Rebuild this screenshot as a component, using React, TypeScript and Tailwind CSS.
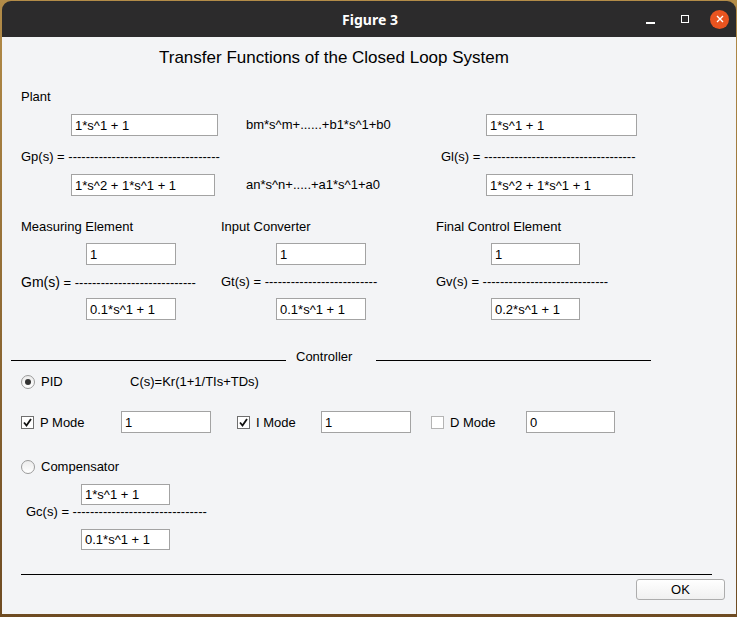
import React from 'react';

const font = "font-['Liberation_Sans',Arial,sans-serif]";

const dashes = (n: number) => '-'.repeat(n);

const Field: React.FC<{ value: string; w: string; h?: string; className?: string }> = ({ value, w, h = 'h-[22px]', className = '' }) => (
  <div className={`${w} ${h} ${className} shrink-0 bg-white border border-[#a3a3a3] flex items-center pl-[3px] text-[13px] text-black leading-none`}>
    {value}
  </div>
);

const CheckBox: React.FC<{ checked: boolean; className?: string }> = ({ checked, className = '' }) => (
  <div
    className={`${className} w-[13px] h-[13px] shrink-0 bg-white border ${checked ? 'border-[#6f6f6f]' : 'border-[#b4b4b4]'} flex items-center justify-center`}
  >
    {checked && (
      <svg width="9" height="9" viewBox="0 0 9 9">
        <path d="M1 4.5 L3.5 7.5 L8 1" fill="none" stroke="#111" strokeWidth="1.8" />
      </svg>
    )}
  </div>
);

const Radio: React.FC<{ checked: boolean; className?: string }> = ({ checked, className = '' }) => (
  <div
    className={`${className} w-[14px] h-[14px] shrink-0 rounded-full border border-[#9a9a9a] bg-gradient-to-b from-[#ececec] to-white flex items-center justify-center`}
  >
    {checked && <div className="w-[6px] h-[6px] rounded-full bg-[#333]" />}
  </div>
);

const App: React.FC = () => {
  return (
    <div className="w-[737px] h-[617px] bg-gradient-to-b from-[#b38c48] to-[#6e4b22] overflow-hidden">
      <div className="ml-[2px] mt-[1px] w-[734px] h-[613px] rounded-t-[9px] overflow-hidden flex flex-col">
        {/* title bar */}
        <div className="h-[36px] shrink-0 bg-[#2c2b2c] flex items-center relative">
          <div className="flex-1 text-center text-white text-[14px] font-bold font-['Noto_Sans',sans-serif] pl-[2px]">
            Figure 3
          </div>
          <div className="absolute right-0 top-0 h-[36px] flex items-center">
            <div className="w-[9px] h-[2px] bg-white mt-[8px]" />
            <div className="ml-[26px] w-[8px] h-[8px] border border-white" />
            <div className="ml-[21px] mr-[7px] w-[19px] h-[19px] rounded-full bg-[#e95420] flex items-center justify-center">
              <svg width="8" height="8" viewBox="0 0 8 8">
                <path d="M1 1 L7 7 M7 1 L1 7" stroke="white" strokeWidth="1.4" />
              </svg>
            </div>
          </div>
        </div>

        {/* body */}
        <div className={`flex-1 bg-[#f3f4f6] text-black text-[13px] ${font} flex flex-col`}>
          <div className="mt-[11px] h-[20px] leading-[20px] pl-[157px] text-[17px]">
            Transfer Functions of the Closed Loop System
          </div>

          <div className="mt-[21px] h-[16px] leading-[16px] pl-[19px]">Plant</div>

          <div className="mt-[9px] h-[22px] flex items-center">
            <Field value="1*s^1 + 1" w="w-[147px]" className="ml-[69px]" />
            <div className="w-[268px] pl-[28px]">bm*s^m+......+b1*s^1+b0</div>
            <Field value="1*s^1 + 1" w="w-[151px]" />
          </div>

          <div className="mt-[13px] h-[16px] leading-[16px] flex pl-[19px] whitespace-nowrap">
            <div className="w-[420px]">Gp(s) = {dashes(35)}</div>
            <div>Gl(s) = {dashes(35)}</div>
          </div>

          <div className="mt-[9px] h-[22px] flex items-center">
            <Field value="1*s^2 + 1*s^1 + 1" w="w-[144px]" className="ml-[69px]" />
            <div className="w-[271px] pl-[31px]">an*s^n+.....+a1*s^1+a0</div>
            <Field value="1*s^2 + 1*s^1 + 1" w="w-[147px]" />
          </div>

          <div className="mt-[23px] h-[16px] leading-[16px] flex pl-[19px] whitespace-nowrap">
            <div className="w-[200px]">Measuring Element</div>
            <div className="w-[215px]">Input Converter</div>
            <div>Final Control Element</div>
          </div>

          <div className="mt-[8px] h-[22px] flex items-center">
            <Field value="1" w="w-[90px]" className="ml-[84px]" />
            <Field value="1" w="w-[90px]" className="ml-[100px]" />
            <Field value="1" w="w-[89px]" className="ml-[125px]" />
          </div>

          <div className="mt-[9px] h-[16px] leading-[16px] flex items-center pl-[19px] whitespace-nowrap">
            <div className="w-[200px]">
              <span className="text-[14px]">Gm(s)</span> = {dashes(28)}
            </div>
            <div className="w-[215px]">Gt(s) = {dashes(26)}</div>
            <div>Gv(s) = {dashes(29)}</div>
          </div>

          <div className="mt-[8px] h-[22px] flex items-center">
            <Field value="0.1*s^1 + 1" w="w-[90px]" className="ml-[84px]" />
            <Field value="0.1*s^1 + 1" w="w-[90px]" className="ml-[100px]" />
            <Field value="0.2*s^1 + 1" w="w-[89px]" className="ml-[125px]" />
          </div>

          {/* controller separator */}
          <div className="mt-[29px] h-[16px] leading-[16px] flex items-center">
            <div className="ml-[9px] w-[275px] h-px bg-black mt-[7px]" />
            <div className="w-[90px] pl-[10px]">Controller</div>
            <div className="w-[275px] h-px bg-black mt-[7px]" />
          </div>

          <div className="mt-[9px] h-[16px] leading-[16px] flex items-center">
            <Radio checked className="ml-[19px]" />
            <div className="ml-[6px] w-[89px]">PID</div>
            <div>C(s)=Kr(1+1/TIs+TDs)</div>
          </div>

          <div className="mt-[21px] h-[22px] flex items-center whitespace-nowrap">
            <CheckBox checked className="ml-[19px]" />
            <div className="ml-[6px] w-[81px] pt-px">P Mode</div>
            <Field value="1" w="w-[90px]" />
            <CheckBox checked className="ml-[26px]" />
            <div className="ml-[6px] w-[65px] pt-px">I Mode</div>
            <Field value="1" w="w-[90px]" />
            <CheckBox checked={false} className="ml-[20px]" />
            <div className="ml-[6px] w-[76px] pt-px">D Mode</div>
            <Field value="0" w="w-[89px]" />
          </div>

          <div className="mt-[26px] h-[16px] leading-[16px] flex items-center">
            <Radio checked={false} className="ml-[19px]" />
            <div className="ml-[6px]">Compensator</div>
          </div>

          <div className="mt-[9px] flex">
            <Field value="1*s^1 + 1" w="w-[89px]" h="h-[21px]" className="ml-[79px]" />
          </div>
          <div className="h-[14px] leading-[14px] pl-[24px] whitespace-nowrap">Gc(s) = {dashes(31)}</div>
          <div className="mt-[10px] flex">
            <Field value="0.1*s^1 + 1" w="w-[89px]" h="h-[21px]" className="ml-[79px]" />
          </div>

          <div className="mt-[24px] ml-[19px] w-[691px] h-px bg-black" />

          <div className="mt-[4px] flex">
            <button className="ml-[634px] w-[89px] h-[21px] rounded-[3px] border border-[#adadad] bg-gradient-to-b from-white to-[#f0f0f0] text-[13px] text-black flex items-center justify-center">
              OK
            </button>
          </div>
        </div>
      </div>
    </div>
  );
};

export default App;
